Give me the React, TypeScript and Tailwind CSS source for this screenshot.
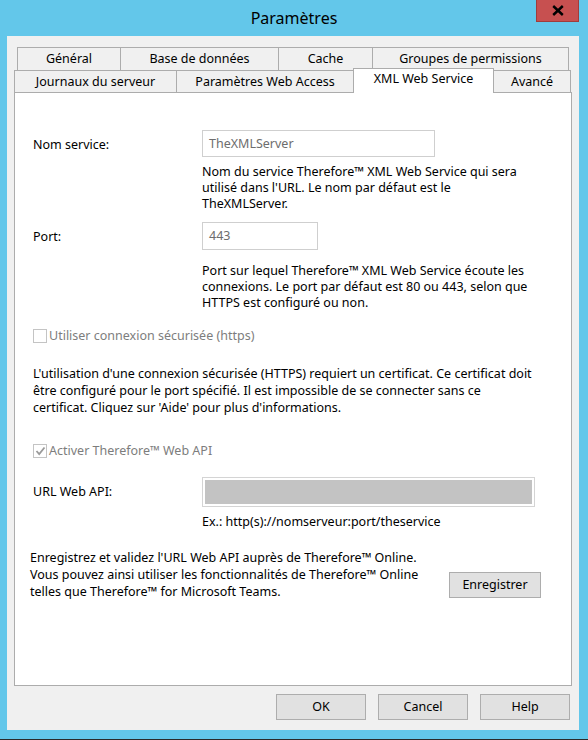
export default function App() {
  const tabBase =
    "border border-b-0 border-[#acacac] bg-[#f0f0f0] flex items-center justify-center whitespace-nowrap";
  return (
    <div className="w-[588px] h-[740px] bg-[#63c7ea] flex flex-col font-['Noto_Sans',sans-serif] text-[12.5px] leading-[16px] text-black overflow-hidden">
      {/* Title bar */}
      <div className="relative h-[36px] flex items-center justify-center shrink-0">
        <span className="text-[16px] leading-[20px] text-black">Paramètres</span>
        <div className="absolute top-0 right-[9px] w-[43px] h-[22px] bg-[#c75050] border border-t-0 border-[#a03c3c] flex items-center justify-center">
          <svg width="12" height="11" viewBox="0 0 12 11">
            <path d="M1.2 1 L10.8 10 M10.8 1 L1.2 10" stroke="#000" strokeWidth="2.4" />
          </svg>
        </div>
      </div>

      {/* Client area */}
      <div className="ml-[7px] w-[572px] h-[694px] bg-[#f0f0f0] flex flex-col shrink-0">
        {/* Tab row 1 */}
        <div className="mt-[11px] ml-[10px] flex h-[23px]">
          <div className={`${tabBase} w-[104px] h-[23px]`}>Général</div>
          <div className={`${tabBase} -ml-px w-[159px] h-[23px]`}>Base de données</div>
          <div className={`${tabBase} -ml-px w-[95px] h-[23px]`}>Cache</div>
          <div className={`${tabBase} -ml-px w-[197px] h-[23px]`}>Groupes de permissions</div>
        </div>
        {/* Tab row 2 */}
        <div className="ml-[7px] flex items-start h-[22px]">
          <div className={`${tabBase} w-[163px] h-[22px] border-t`}>Journaux du serveur</div>
          <div className={`${tabBase} -ml-px w-[178px] h-[22px]`}>Paramètres Web Access</div>
          <div className="relative z-10 -ml-px -mt-[2px] w-[141px] h-[25px] border border-b-0 border-[#acacac] bg-white flex items-start justify-center pt-[2px] whitespace-nowrap">
            XML Web Service
          </div>
          <div className={`${tabBase} -ml-px w-[78px] h-[22px]`}>Avancé</div>
        </div>

        {/* Panel */}
        <div className="ml-[7px] w-[558px] h-[594px] border border-[#acacac] bg-white flex flex-col pl-[18px] shrink-0">
          {/* Nom service */}
          <div className="mt-[37px] h-[27px] flex items-center">
            <div className="w-[169px] pt-[2px]">Nom service:</div>
            <div className="w-[233px] h-[27px] border border-[#cfcfcf] bg-white pl-[6px] flex items-center text-[#6d6d6d]">
              TheXMLServer
            </div>
          </div>
          <div className="mt-[7px] ml-[169px] whitespace-nowrap">
            Nom du service Therefore™ XML Web Service qui sera
            <br />
            utilisé dans l'URL. Le nom par défaut est le
            <br />
            TheXMLServer.
          </div>

          {/* Port */}
          <div className="mt-[10px] h-[28px] flex items-center">
            <div className="w-[169px] pt-[2px]">Port:</div>
            <div className="w-[116px] h-[28px] border border-[#cfcfcf] bg-white pl-[6px] flex items-center text-[#6d6d6d]">
              443
            </div>
          </div>
          <div className="mt-[13px] ml-[169px] whitespace-nowrap">
            Port sur lequel Therefore™ XML Web Service écoute les
            <br />
            connexions. Le port par défaut est 80 ou 443, selon que
            <br />
            HTTPS est configuré ou non.
          </div>

          {/* Checkbox https */}
          <div className="mt-[17px] h-[16px] flex items-center gap-[2px] text-[#7d7d7d]">
            <div className="w-[14px] h-[14px] border border-[#c4c4c4] bg-white" />
            <span>Utiliser connexion sécurisée (https)</span>
          </div>

          <div className="mt-[21px] leading-[17px] whitespace-nowrap">
            L'utilisation d'une connexion sécurisée (HTTPS) requiert un certificat. Ce certificat doit
            <br />
            être configuré pour le port spécifié. Il est impossible de se connecter sans ce
            <br />
            certificat. Cliquez sur 'Aide' pour plus d'informations.
          </div>

          {/* Checkbox web api */}
          <div className="mt-[27px] h-[16px] flex items-center gap-[2px] text-[#7d7d7d]">
            <div className="w-[14px] h-[14px] border border-[#c4c4c4] bg-white flex items-center justify-center">
              <svg width="11" height="10" viewBox="0 0 11 10">
                <path d="M1.5 5 L4.2 8 L9.5 1.5" fill="none" stroke="#9a9a9a" strokeWidth="1.8" />
              </svg>
            </div>
            <span>Activer Therefore™ Web API</span>
          </div>

          {/* URL */}
          <div className="mt-[18px] h-[30px] flex items-center">
            <div className="w-[169px]">URL Web API:</div>
            <div className="w-[333px] h-[30px] border border-[#d4d4d4] bg-white p-[2px]">
              <div className="w-full h-full bg-[#c3c3c3]" />
            </div>
          </div>
          <div className="mt-[7px] ml-[169px] whitespace-nowrap">Ex.: http(s)://nomserveur:port/theservice</div>

          {/* Register */}
          <div className="mt-[19px] -ml-[3px] flex">
            <div className="w-[419px] leading-[17px] whitespace-nowrap">
              Enregistrez et validez l'URL Web API auprès de Therefore™ Online.
              <br />
              Vous pouvez ainsi utiliser les fonctionnalités de Therefore™ Online
              <br />
              telles que Therefore™ for Microsoft Teams.
            </div>
            <div className="mt-[23px] w-[92px] h-[26px] border border-[#adadad] bg-[#e1e1e1] flex items-center justify-center">
              Enregistrer
            </div>
          </div>
        </div>

        {/* Buttons */}
        <div className="mt-[8px] pr-[9px] flex justify-end gap-[12px]">
          <div className="w-[90px] h-[26px] border border-[#adadad] bg-[#e1e1e1] flex items-center justify-center">OK</div>
          <div className="w-[90px] h-[26px] border border-[#adadad] bg-[#e1e1e1] flex items-center justify-center">Cancel</div>
          <div className="w-[90px] h-[26px] border border-[#adadad] bg-[#e1e1e1] flex items-center justify-center">Help</div>
        </div>
      </div>
      <div className="flex-1" />
      <div className="h-[1px] bg-[#2a2a2a] shrink-0" />
    </div>
  );
}
